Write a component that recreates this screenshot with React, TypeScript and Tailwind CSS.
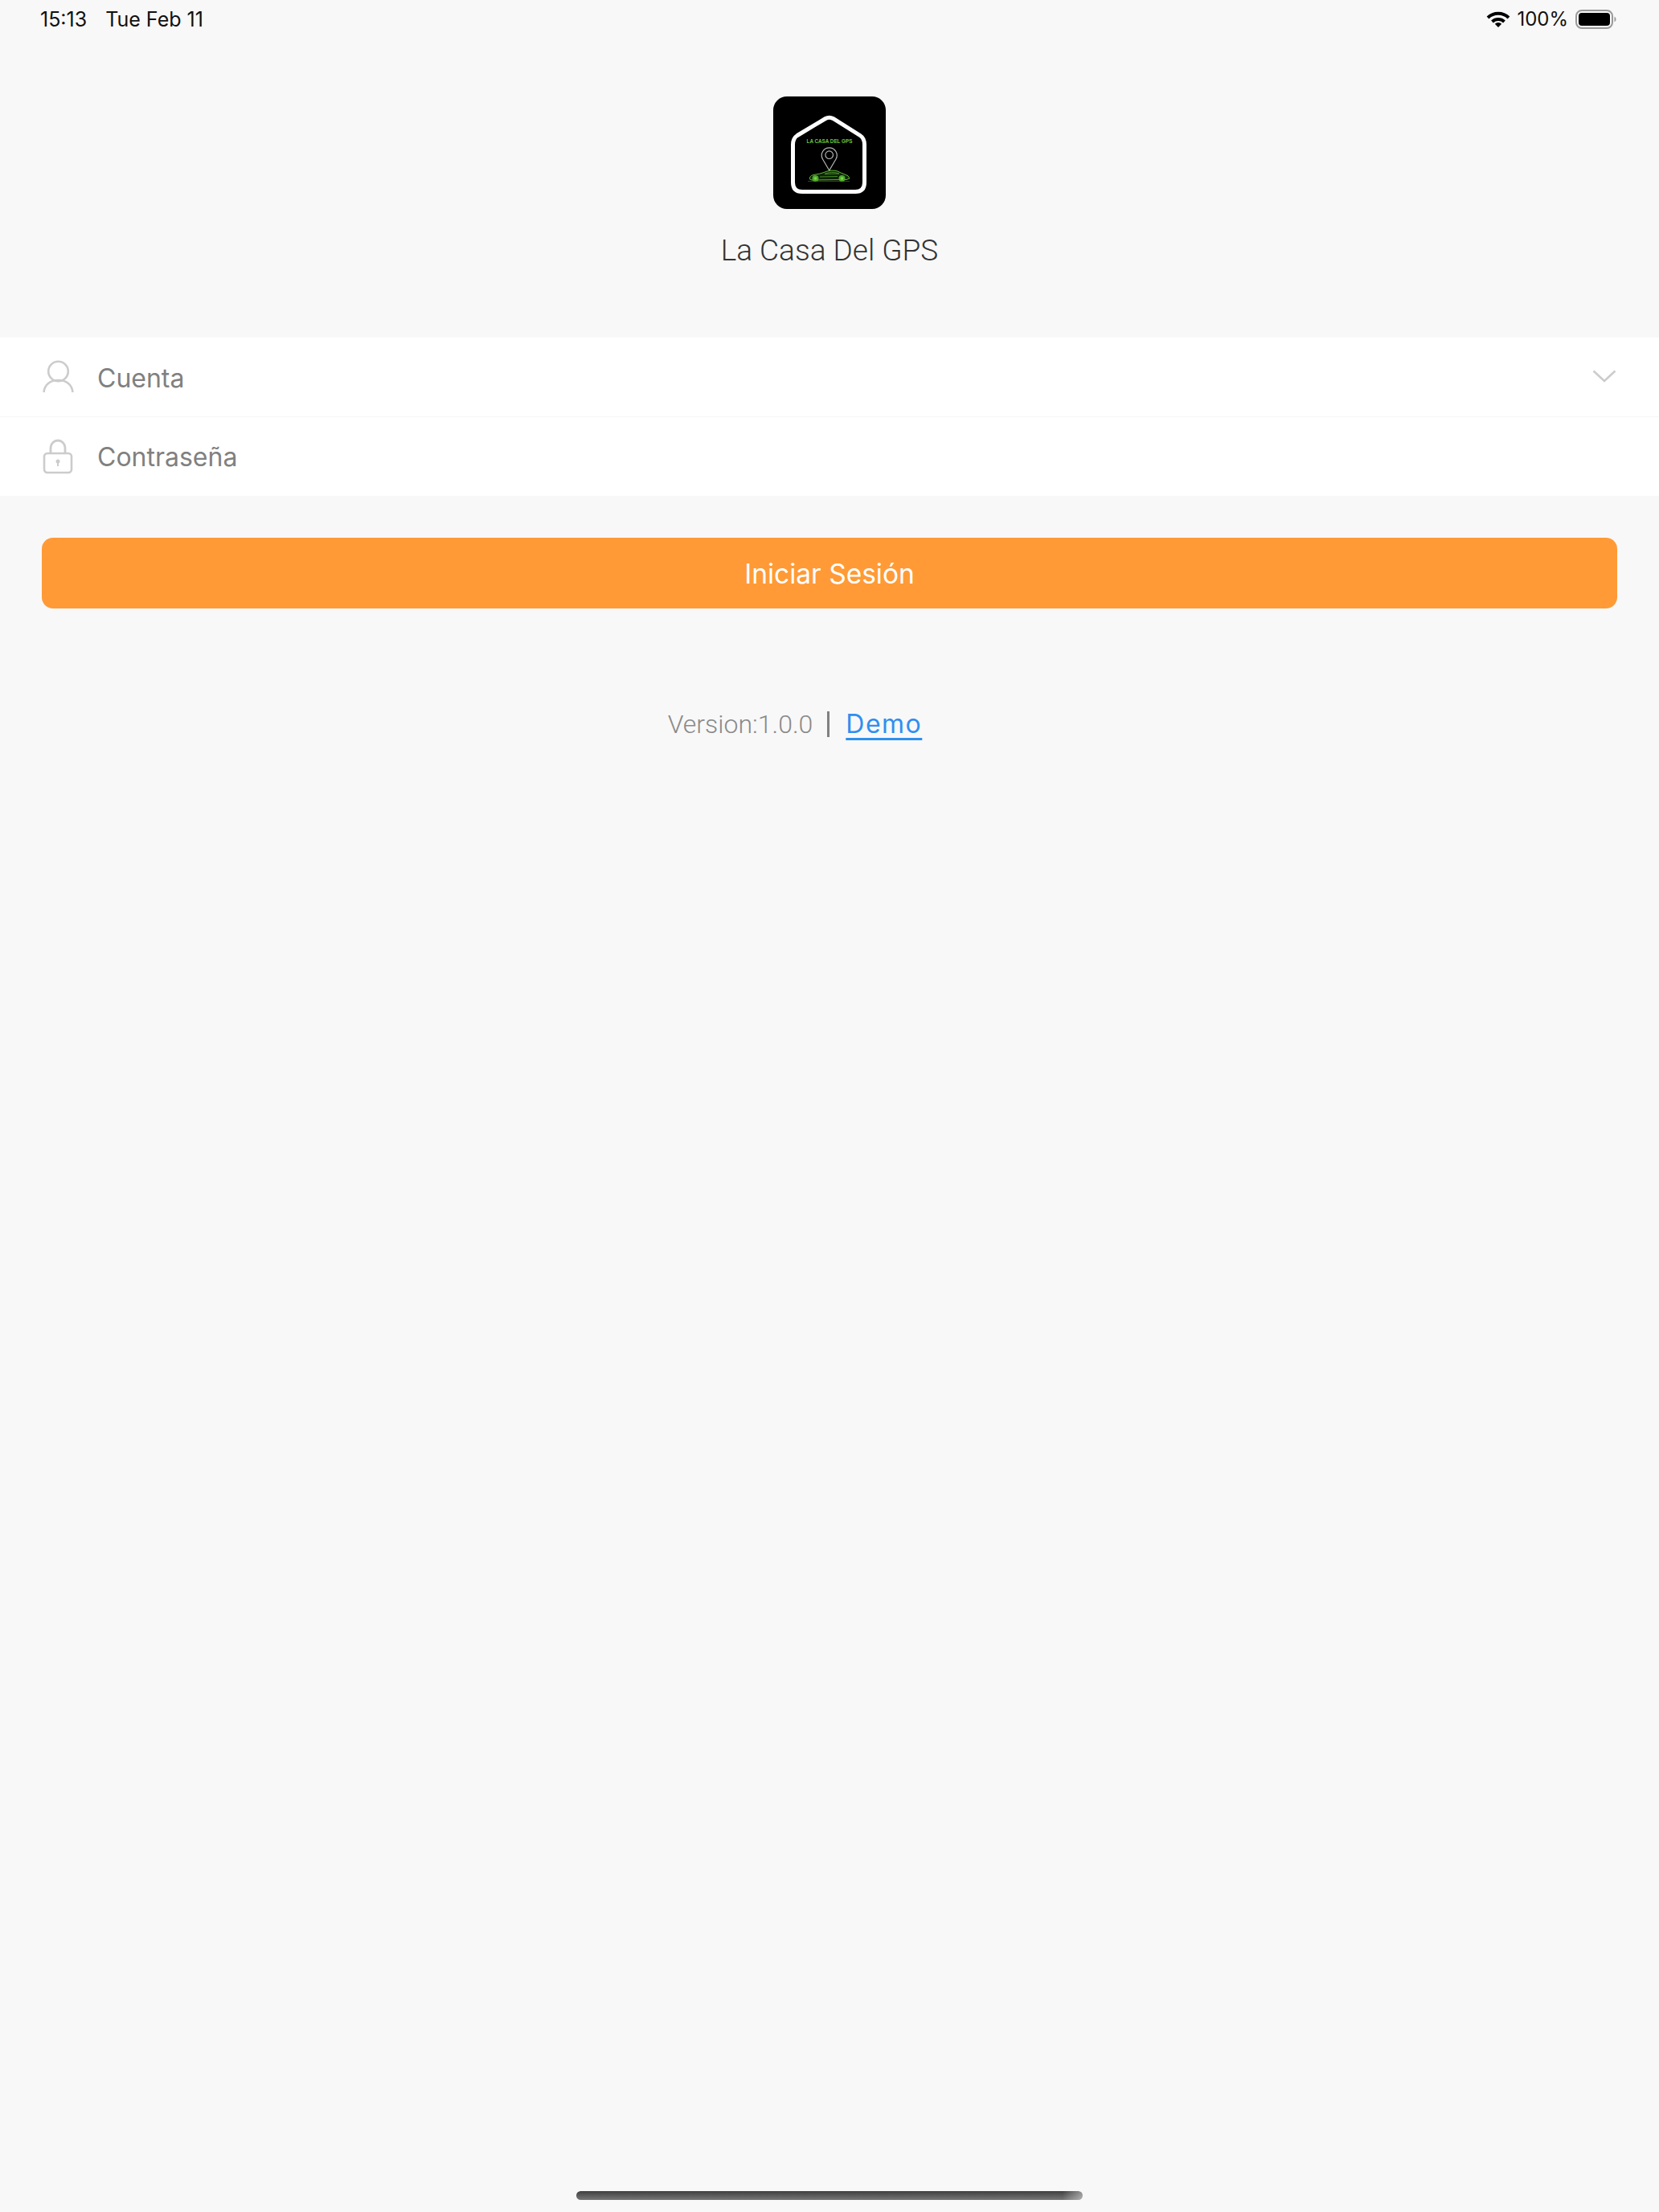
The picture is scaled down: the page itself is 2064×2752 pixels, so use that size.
export default function App() {
  return (
    <div className="flex h-[2752px] w-[2064px] flex-col overflow-hidden bg-[#f8f8f8] font-['Inter',sans-serif]">
      <div className="flex h-[48px] items-center justify-between pl-[50px] pr-[53px] text-[25px] leading-none text-[#111]">
        <div className="flex gap-[23px]">
          <span>15:13</span>
          <span>Tue Feb 11</span>
        </div>
        <div className="flex items-center">
          <svg width="30" height="22" viewBox="0 0 30 22" className="mr-[8px]">
            <path d="M2 9 A19 19 0 0 1 28 9" fill="none" stroke="#000" strokeWidth="4" />
            <path d="M7.5 14 A11 11 0 0 1 22.5 14" fill="none" stroke="#000" strokeWidth="4" />
            <path d="M15 21 L10.8 16.8 A6 6 0 0 1 19.2 16.8 Z" fill="#000" />
          </svg>
          <span className="mr-[9px] text-[24px]">100%</span>
          <svg width="51" height="24" viewBox="0 0 51 24">
            <rect x="1" y="1" width="45" height="22" rx="7" fill="none" stroke="#999" strokeWidth="2" />
            <rect x="4" y="4" width="39" height="16" rx="4" fill="#000" />
            <path d="M48.500 8.500 A4 4 0 0 1 48.500 15.500 Z" fill="#999" />
          </svg>
        </div>
      </div>

      <div className="mt-[72px] flex flex-col items-center">
        <svg width="140" height="140" viewBox="0 0 140 140" className="rounded-[17px] bg-black">
          <path
            d="M24.500 60 Q24.500 52 30 48.500 L65 27.500 Q69.700 24.800 74.500 27.500 L108 48.500 Q113.500 52 113.500 60 L113.500 107 Q113.500 118.500 102 118.500 L36 118.500 Q24.500 118.500 24.500 107 Z"
            fill="none"
            stroke="#fff"
            strokeWidth="5"
          />
          <text x="70" y="57.500" textAnchor="middle" fontFamily="Liberation Sans, sans-serif" fontWeight="700" fontSize="6.300" fill="#6cc83c">
            LA CASA DEL GPS
          </text>
          <path
            d="M69.700 92 L61.500 78 A9.500 9.500 0 1 1 78 78 Z"
            fill="none"
            stroke="#b5b5b5"
            strokeWidth="1.200"
          />
          <circle cx="69.700" cy="72.700" r="4.800" fill="none" stroke="#b5b5b5" strokeWidth="1.200" />
          <path
            d="M45.500 103 Q44.500 99 50 97.500 Q58 96.500 63 94.500 Q72 90.500 80 93 Q85 95.500 89 97 Q94 98 95 102 L91 103.500 L48 104 Z"
            fill="#0d2407"
            stroke="#6cc83c"
            strokeWidth="0.900"
          />
          <path d="M64 96.500 Q72 92.500 82 96 Z M58 100 L80 99.500" fill="none" stroke="#6cc83c" strokeWidth="0.600" />
          <circle cx="52.500" cy="102" r="4" fill="#4fa82c" />
          <circle cx="52.500" cy="102" r="1.800" fill="#78d84a" />
          <circle cx="85.500" cy="102" r="4" fill="#4fa82c" />
          <circle cx="85.500" cy="102" r="1.800" fill="#78d84a" />
          <path d="M43 105.500 L95 105.500" stroke="#4f8f30" strokeWidth="0.500" />
        </svg>
        <div className="mt-[31px] text-[37px] font-light leading-[42px] text-[#333] font-['Roboto',sans-serif]">
          La Casa Del GPS
        </div>
      </div>

      <div className="mt-[87px] bg-white">
        <div className="flex h-[99px] items-center border-b border-[#f6f6f6] pl-[53px] pr-[53px] text-[32px] text-[#808080]">
          <svg width="40" height="42" viewBox="0 0 40 42" className="mr-[28px] mb-[2px]">
            <circle cx="19.500" cy="15" r="12.300" fill="none" stroke="#cccccc" strokeWidth="2.600" />
            <path d="M1.500 41 C2.500 31 10 26 19.500 26 C29 26 36.500 31 37.500 41" fill="none" stroke="#cccccc" strokeWidth="2.600" />
          </svg>
          <span className="mt-[4px] flex-1">Cuenta</span>
          <svg width="30" height="17" viewBox="0 0 30 17" className="mb-[2px]">
            <path d="M1.500 1.500 L15 14 L28.500 1.500" fill="none" stroke="#cccccc" strokeWidth="2.600" />
          </svg>
        </div>
        <div className="flex h-[98px] items-center pl-[53px] text-[32px] text-[#808080]">
          <svg width="38" height="44" viewBox="0 0 38 44" className="mr-[30px]">
            <rect x="2" y="18" width="34" height="24" rx="4" fill="none" stroke="#cccccc" strokeWidth="2.600" />
            <path d="M10 18 L10 11 A9 9 0 0 1 28 11 L28 18" fill="none" stroke="#cccccc" strokeWidth="2.800" />
            <circle cx="19" cy="28" r="2.500" fill="#cccccc" />
            <rect x="18" y="28" width="2" height="6" fill="#cccccc" />
          </svg>
          <span className="mt-[1px]">Contraseña</span>
        </div>
      </div>

      <div className="mx-[52px] mt-[52px] flex h-[88px] items-center justify-center rounded-[14px] bg-[#ff9a36] pt-[2px] text-[33.500px] text-white">
        Iniciar Sesión
      </div>

      <div className="mt-[124px] flex items-center justify-center pr-[86px] text-[32px] leading-[40px]">
        <span className="font-light text-[#8a8a8a] font-['Roboto',sans-serif]">Version:1.0.0</span>
        <span className="ml-[18px] mr-[20px] h-[32px] w-[3px] bg-[#808080]" />
        <span className="tracking-[1.500px] text-[#2f8ff0] underline underline-offset-[6px]">Demo</span>
      </div>

      <div className="flex-1" />
      <div className="mx-auto mb-[15px] h-[11px] w-[630px] rounded-full bg-[linear-gradient(to_right,transparent_96%,rgba(248,248,248,0.45)_100%),linear-gradient(to_bottom,#3f3f3f,#777777)]" />
    </div>
  );
}
